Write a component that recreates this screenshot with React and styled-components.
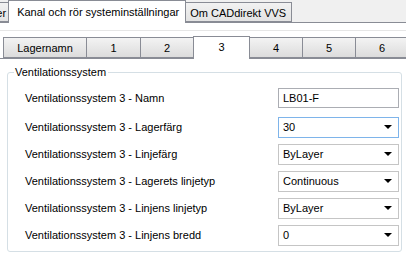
import React from 'react';
import styled, { createGlobalStyle } from 'styled-components';

const GlobalStyle = createGlobalStyle`
  body {
    margin: 0;
    background: #ffffff;
    font-family: "Liberation Sans", Tahoma, Arial, sans-serif;
    font-size: 11px;
    color: #000;
  }
`;

const outerTabs = [
  { label: 'Lager', cut: true },
  { label: 'Kanal och rör systeminställningar', active: true },
  { label: 'Om CADdirekt VVS' }
];

const innerTabs = [
  { label: 'Lagernamn', width: 84 },
  { label: '1', width: 55 },
  { label: '2', width: 54 },
  { label: '3', width: 57, active: true },
  { label: '4', width: 54 },
  { label: '5', width: 54 },
  { label: '6', width: 54 }
];

const rows = [
  { label: 'Namn', value: 'LB01-F', text: true },
  { label: 'Lagerfärg', value: '30', focused: true },
  { label: 'Linjefärg', value: 'ByLayer' },
  { label: 'Lagerets linjetyp', value: 'Continuous' },
  { label: 'Linjens linjetyp', value: 'ByLayer' },
  { label: 'Linjens bredd', value: '0' }
];

const App = () => (
  <Window>
    <GlobalStyle />
    <OuterStrip>
      {outerTabs.map(tab => (
        <OuterTab key={tab.label} active={tab.active} cut={tab.cut}>
          {tab.label}
        </OuterTab>
      ))}
    </OuterStrip>
    <Page>
      <FaintRule />
      <InnerStrip>
        {innerTabs.map(tab => (
          <InnerTab key={tab.label} active={tab.active} width={tab.width}>
            {tab.label}
          </InnerTab>
        ))}
      </InnerStrip>
      <Group>
        <Legend>Ventilationssystem</Legend>
        <Rows>
          {rows.map(row => (
            <Row key={row.label}>
              <Label>Ventilationssystem 3 - {row.label}</Label>
              {row.text ? (
                <TextBox>{row.value}</TextBox>
              ) : (
                <Combo focused={row.focused}>
                  <span>{row.value}</span>
                  <Arrow />
                </Combo>
              )}
            </Row>
          ))}
        </Rows>
      </Group>
    </Page>
  </Window>
);

const Window = styled.div`
  width: 406px;
  height: 255px;
  overflow: hidden;
  background: #ffffff;
`;

const OuterStrip = styled.div`
  display: flex;
  align-items: flex-end;
  height: 22px;
  background: #f0f0f0;
  border-bottom: 1px solid #898c95;
`;

const OuterTab = styled.div`
  position: relative;
  display: flex;
  align-items: center;
  box-sizing: border-box;
  height: ${({ active }) => (active ? '23px' : '20px')};
  margin-bottom: ${({ active }) => (active ? '-1px' : '0')};
  margin-left: ${({ cut }) => (cut ? '-27px' : '-1px')};
  padding: ${({ active, cut }) =>
    active ? '0 6px 0 8px' : cut ? '1px 2px 0 4px' : '1px 5px 0 4px'};
  border: 1px solid #898c95;
  border-bottom: ${({ active }) => (active ? 'none' : '1px solid #898c95')};
  background: ${({ active }) =>
    active ? '#ffffff' : 'linear-gradient(#f2f2f2, #e3e3e3)'};
  z-index: ${({ active }) => (active ? 1 : 0)};
  white-space: nowrap;
`;

const Page = styled.div`
  display: flex;
  flex-direction: column;
  padding: 7px 0 0 3px;
`;

const FaintRule = styled.div`
  height: 1px;
  margin-left: -3px;
  background: #e6e6e6;
`;

const InnerStrip = styled.div`
  display: flex;
  align-items: flex-end;
  height: 22px;
  margin-top: 5px;
  border-bottom: 1px solid #898c95;
  margin-left: -3px;
  padding-left: 3px;
`;

const InnerTab = styled.div`
  position: relative;
  display: flex;
  align-items: center;
  justify-content: center;
  flex: none;
  box-sizing: border-box;
  width: ${({ width }) => width}px;
  height: ${({ active }) => (active ? '23px' : '21px')};
  margin-bottom: ${({ active }) => (active ? '-1px' : '0')};
  margin-left: -1px;
  border: 1px solid #898c95;
  border-bottom: ${({ active }) => (active ? 'none' : '1px solid #898c95')};
  background: ${({ active }) =>
    active ? '#ffffff' : 'linear-gradient(#f3f3f3, #dcdcdc)'};
  z-index: ${({ active }) => (active ? 1 : 0)};
  padding-bottom: ${({ active }) => (active ? '2px' : '0')};

  &:first-child {
    margin-left: 0;
  }
`;

const Group = styled.fieldset`
  box-sizing: border-box;
  width: 395px;
  height: 186px;
  margin: 7px 0 0 4px;
  padding: 0;
  border: 1px solid #d5dfe5;
  border-radius: 3px;
`;

const Legend = styled.legend`
  margin-left: 6px;
  padding: 0 2px 0 1px;
  line-height: 13px;
`;

const Rows = styled.div`
  display: flex;
  flex-direction: column;
  gap: 7px;
  padding: 9px 2px 0 17px;
`;

const Row = styled.div`
  display: flex;
  align-items: center;
  justify-content: space-between;
  height: 20px;

  &:first-child {
    margin-bottom: 2px;
  }
`;

const Label = styled.span`
  white-space: nowrap;
`;

const TextBox = styled.div`
  box-sizing: border-box;
  width: 121px;
  height: 20px;
  padding: 0 4px;
  display: flex;
  align-items: center;
  border: 1px solid #abadb3;
  background: #fff;
`;

const Combo = styled.div`
  box-sizing: border-box;
  width: 121px;
  height: 21px;
  padding: 0 4px;
  display: flex;
  align-items: center;
  justify-content: space-between;
  border: 1px solid ${({ focused }) => (focused ? '#7eb4ea' : '#c5c5c5')};
  background: #fff;
`;

const Arrow = styled.i`
  width: 0;
  height: 0;
  margin-right: 2px;
  border-left: 4px solid transparent;
  border-right: 4px solid transparent;
  border-top: 4px solid #000;
`;

export default App;
